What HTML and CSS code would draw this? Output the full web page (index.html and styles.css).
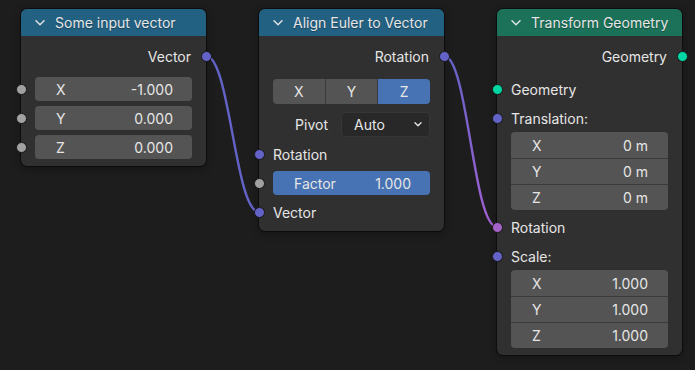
FILE: index.html
```html
<!DOCTYPE html>
<html lang="en">
<head>
    <meta charset="UTF-8">
    <title>Node Editor</title>
    <link rel="stylesheet" href="styles.css">
</head>
<body>
    <div class="canvas">
        <!-- noodles between sockets -->
        <svg class="links" width="695" height="370" viewBox="0 0 695 370">
            <defs>
                <linearGradient id="rot-link" gradientUnits="userSpaceOnUse" x1="444" y1="56" x2="497" y2="227">
                    <stop offset="0" stop-color="#6363c7"/>
                    <stop offset="1" stop-color="#a35fd0"/>
                </linearGradient>
            </defs>
            <path d="M206 56 C230 56 235 212 259 212" stroke="#6363c7"/>
            <path d="M444 56 C468 56 473 227 497 227" stroke="url(#rot-link)"/>
        </svg>

        <div class="node node-1">
            <div class="node-header converter">
                <svg class="chevron" width="10" height="6" viewBox="0 0 10 6"><polyline points="1,0.8 5,4.8 9,0.8"/></svg>
                <span>Some input vector</span>
            </div>
            <div class="node-body">
                <div class="row out">Vector<span class="socket out vector"></span></div>
                <div class="field"><span class="socket in value"></span><span>X</span><span>-1.000</span></div>
                <div class="field"><span class="socket in value"></span><span>Y</span><span>0.000</span></div>
                <div class="field"><span class="socket in value"></span><span>Z</span><span>0.000</span></div>
            </div>
        </div>

        <div class="node node-2">
            <div class="node-header converter">
                <svg class="chevron" width="10" height="6" viewBox="0 0 10 6"><polyline points="1,0.8 5,4.8 9,0.8"/></svg>
                <span>Align Euler to Vector</span>
            </div>
            <div class="node-body">
                <div class="row out">Rotation<span class="socket out vector"></span></div>
                <div class="segmented">
                    <div class="seg">X</div>
                    <div class="seg">Y</div>
                    <div class="seg active">Z</div>
                </div>
                <div class="prop-row">
                    <span class="prop-label">Pivot</span>
                    <div class="dropdown">
                        <span>Auto</span>
                        <svg class="chevron small" width="8" height="5" viewBox="0 0 8 5"><polyline points="1,0.8 4,3.8 7,0.8"/></svg>
                    </div>
                </div>
                <div class="row"><span class="socket in vector"></span>Rotation</div>
                <div class="field blue"><span class="socket in value"></span><span>Factor</span><span>1.000</span></div>
                <div class="row"><span class="socket in vector"></span>Vector</div>
            </div>
        </div>

        <div class="node node-3">
            <div class="node-header geometry">
                <svg class="chevron" width="10" height="6" viewBox="0 0 10 6"><polyline points="1,0.8 5,4.8 9,0.8"/></svg>
                <span>Transform Geometry</span>
            </div>
            <div class="node-body">
                <div class="row out">Geometry<span class="socket out geo"></span></div>
                <div class="row"><span class="socket in geo"></span>Geometry</div>
                <div class="group">
                    <div class="row"><span class="socket in vector"></span>Translation:</div>
                    <div class="stack">
                        <div class="field"><span>X</span><span>0 m</span></div>
                        <div class="field"><span>Y</span><span>0 m</span></div>
                        <div class="field"><span>Z</span><span>0 m</span></div>
                    </div>
                </div>
                <div class="row"><span class="socket in rotation"></span>Rotation</div>
                <div class="group">
                    <div class="row"><span class="socket in vector"></span>Scale:</div>
                    <div class="stack">
                        <div class="field"><span>X</span><span>1.000</span></div>
                        <div class="field"><span>Y</span><span>1.000</span></div>
                        <div class="field"><span>Z</span><span>1.000</span></div>
                    </div>
                </div>
            </div>
        </div>
    </div>
</body>
</html>
```

FILE: styles.css
```css
body {
    margin: 0;
    background-color: #1d1d1d;
    font-family: Inter, "Noto Sans", sans-serif;
    font-size: 14px;
    color: #e6e6e6;
    overflow: hidden;
}
.canvas {
    position: relative;
    width: 695px;
    height: 370px;
}
.links {
    position: absolute;
    left: 0;
    top: 0;
}
.links path {
    fill: none;
    stroke-width: 2.4;
}

/* nodes sit on the canvas at their own coordinates */
.node {
    position: absolute;
    top: 9px;
    width: 185px;
    background-color: #303030;
    border-radius: 6px;
    box-shadow: 0 0 0 1px rgba(0, 0, 0, 0.45), 0 2px 8px rgba(0, 0, 0, 0.35);
}
.node-1 { left: 21px; }
.node-2 { left: 259px; }
.node-3 { left: 497px; }

.node-header {
    height: 27px;
    display: flex;
    align-items: center;
    gap: 10px;
    padding-left: 14px;
    border-radius: 6px 6px 0 0;
    text-shadow: 0 1px 1px rgba(0, 0, 0, 0.35);
}
.node-header.converter {
    background-color: #236183;
}
.node-header.geometry {
    background-color: #1c7259;
}
.chevron polyline {
    fill: none;
    stroke: #e6e6e6;
    stroke-width: 1.4;
    stroke-linecap: round;
    stroke-linejoin: round;
}

.node-body {
    display: flex;
    flex-direction: column;
    gap: 5px;
    padding: 8px 14px 7px;
}
.row {
    position: relative;
    height: 24px;
    display: flex;
    align-items: center;
}
.row.out {
    justify-content: flex-end;
    padding-right: 1px;
    margin-bottom: 4px;
}

.socket {
    position: absolute;
    top: 50%;
    width: 9px;
    height: 9px;
    margin-top: -5.5px;
    border: 1px solid #171717;
    border-radius: 50%;
}
.socket.in { left: -19.5px; }
.socket.out { right: -19.5px; }
.socket.vector { background-color: #6363c7; }
.socket.value { background-color: #a1a1a1; }
.socket.geo { background-color: #00d6a3; }
.socket.rotation { background-color: #a663c7; }

.field {
    position: relative;
    height: 24px;
    display: flex;
    align-items: center;
    justify-content: space-between;
    padding: 0 19px 0 21px;
    background-color: #545454;
    border-radius: 4px;
}
.field.blue {
    background-color: #4772b3;
}

.segmented {
    display: flex;
    height: 25px;
    margin-top: 2px;
    gap: 1px;
    background-color: #3a3a3a;
    border-radius: 4px;
    overflow: hidden;
}
.seg {
    flex: 1;
    display: flex;
    align-items: center;
    justify-content: center;
    background-color: #545454;
}
.seg.active {
    background-color: #4772b3;
}

.prop-row {
    display: flex;
    height: 25px;
    margin-top: 3px;
}
.prop-label {
    width: 68px;
    padding-right: 13px;
    box-sizing: border-box;
    display: flex;
    align-items: center;
    justify-content: flex-end;
}
.dropdown {
    flex: 1;
    display: flex;
    align-items: center;
    justify-content: space-between;
    padding: 0 7px 0 12px;
    background-color: #282828;
    border: 1px solid #363636;
    border-radius: 4px;
}

.group {
    display: flex;
    flex-direction: column;
    gap: 2px;
}
.stack {
    border-radius: 4px;
    overflow: hidden;
}
.stack .field {
    height: 26px;
    box-sizing: border-box;
    border-radius: 0;
    padding-right: 20px;
}
.stack .field + .field {
    border-top: 1px solid #3a3a3a;
}
```
